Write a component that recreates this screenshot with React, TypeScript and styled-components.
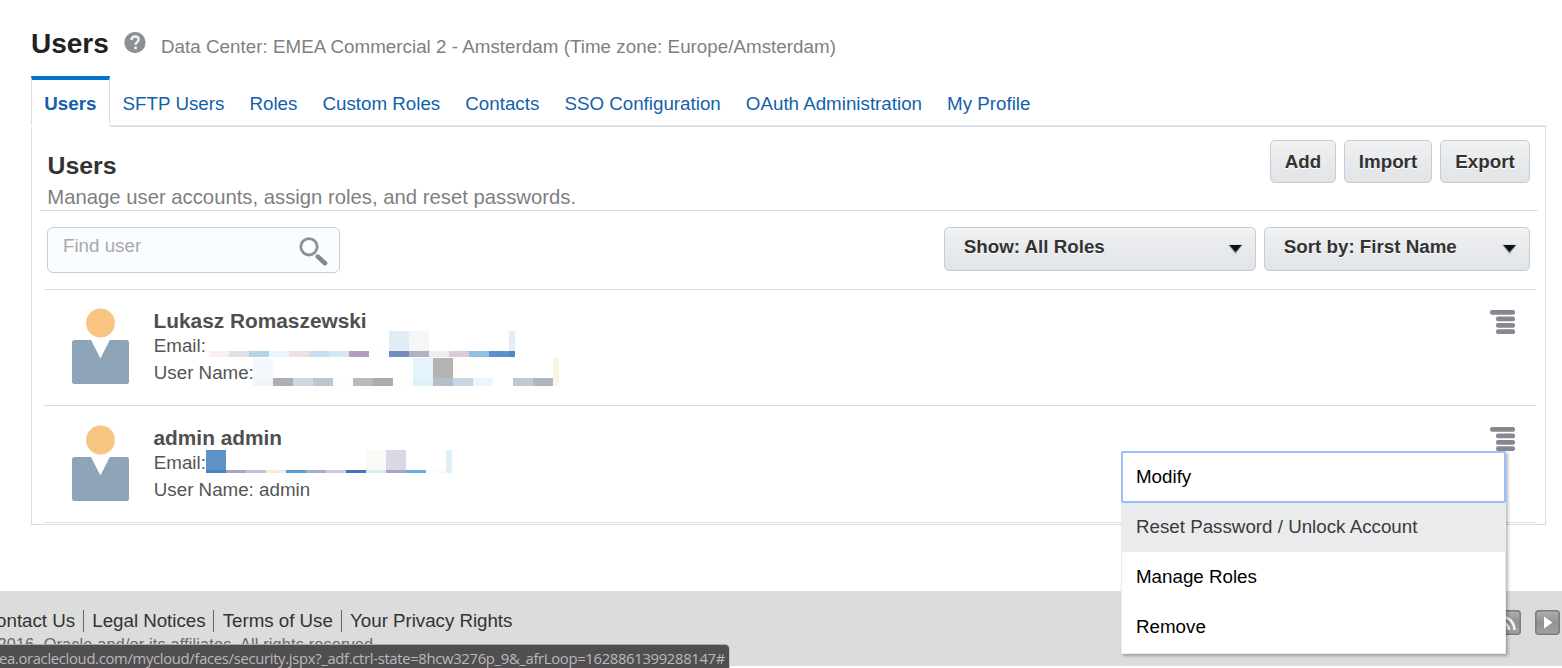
import React from "react";
import styled, { createGlobalStyle } from "styled-components";

const GlobalStyle = createGlobalStyle`
  *, *::before, *::after { box-sizing: border-box; }
  html, body { margin: 0; padding: 0; background: #fff; overflow: hidden; }
  body { font-family: "Liberation Sans", Arial, sans-serif; font-size: 18.75px; }
  button { font-family: inherit; }
`;

const LINE = "#d5dee6";

const Page = styled.div`
  position: relative;
  display: flex;
  flex-direction: column;
  width: 1562px;
  height: 668px;
  overflow: hidden;
  background: #fff;
`;

const PageHeader = styled.header`
  display: flex;
  align-items: flex-start;
  height: 76px;
  padding: 27px 0 0 31px;
`;

const PageTitle = styled.h1`
  margin: 0;
  width: 93px;
  font-size: 28px;
  line-height: 34px;
  color: #222;
`;

const HelpSlot = styled.span`
  display: block;
  width: 37px;
  height: 22px;
  margin-top: 5px;
`;

const DataCenter = styled.span`
  line-height: 39px;
  letter-spacing: 0.035px;
  color: #7f7f7f;
  white-space: nowrap;
`;

const TabBar = styled.nav`
  display: flex;
  height: 49px;
  padding-left: 31px;
`;

const Tab = styled.a<{ $active?: boolean }>`
  line-height: ${(p) => (p.$active ? "48px" : "56px")};
  width: ${(p) => (p.$active ? "79px" : "auto")};
  padding-left: ${(p) => (p.$active ? "12.3px" : "12.6px")};
  padding-right: ${(p) => (p.$active ? "0" : "12.5px")};
  border: ${(p) => (p.$active ? `1px solid ${LINE}` : "none")};
  border-bottom: none;
  border-top: ${(p) => (p.$active ? "4px solid #0572ce" : "none")};
  font-weight: ${(p) => (p.$active ? "bold" : "normal")};
  color: #145fac;
  white-space: nowrap;
  text-decoration: none;
`;

const TabRule = styled.div`
  height: 2px;
  margin: 0 16px 0 110px;
  border-top: 1px solid #e6eaec;
  border-bottom: 1px solid #d0dbe4;
`;

const Panel = styled.main`
  display: flex;
  flex-direction: column;
  width: 1515px;
  height: 398px;
  margin-left: 31px;
  border: 1px solid ${LINE};
  border-top: none;
`;

const PanelHead = styled.div`
  display: flex;
  justify-content: space-between;
  height: 84px;
  margin: 0 7px 0 8px;
  padding: 13px 8px 0 7px;
  border-bottom: 1px solid ${LINE};
`;

const PanelTitle = styled.h2`
  margin: 11px 0 0 0.5px;
  font-size: 24.8px;
  line-height: 30px;
  color: #333;
`;

const PanelIntro = styled.p`
  margin: 1px 0 0 0.3px;
  font-size: 20.3px;
  line-height: 30px;
  color: #7f7f7f;
  white-space: nowrap;
`;

const ButtonRow = styled.div`
  display: flex;
  gap: 8px;
`;

const raised = `
  border: 1px solid #c2cdd6;
  border-radius: 5px;
  background: linear-gradient(#f0f2f4, #e9ebed 40%, #e1e4e7);
  color: #333;
  font-weight: bold;
  font-size: 18.75px;
  text-shadow: 0 1px 0 #fff;
`;

const Button = styled.button<{ $width: number }>`
  ${raised}
  width: ${(p) => p.$width}px;
  height: 43px;
  padding: 0;
  line-height: 41px;
`;

const Toolbar = styled.div`
  display: flex;
  height: 78px;
  padding: 16px 15px 0 15px;
`;

const SearchBox = styled.label`
  display: flex;
  justify-content: space-between;
  width: 293px;
  height: 46px;
  margin-right: auto;
  padding: 0 11px 0 15px;
  border: 1px solid #c4ced7;
  border-radius: 6px;
  background: #fafdff;
  line-height: 35px;
  color: #a9a9a9;
`;

const SearchIconSlot = styled.span`
  width: 30px;
  padding-top: 8px;
  line-height: 0;
`;

const Select = styled.button<{ $width: number }>`
  ${raised}
  display: flex;
  justify-content: space-between;
  width: ${(p) => p.$width}px;
  height: 44px;
  margin-left: 8px;
  padding: 0 12px 0 18.8px;
  line-height: 38px;
  text-align: left;

  svg { margin-top: 16px; }
`;

const UserRow = styled.article<{ $height: number; $top: number }>`
  position: relative;
  display: flex;
  height: ${(p) => p.$height}px;
  margin: 0 9px 0 12px;
  padding: ${(p) => p.$top}px 21px 0 28px;
  border-top: 1px solid ${LINE};
`;

const UserList = styled.section`
  display: flex;
  flex-direction: column;

  &::after {
    content: "";
    margin: 0 9px 0 12px;
    border-top: 1px solid ${LINE};
  }
`;

const Avatar = styled.svg`
  width: 57px;
  height: 77px;
  flex: none;
`;

const UserInfo = styled.div`
  flex: 1;
  margin-left: 24px;
  color: #555;
`;

const UserName = styled.div`
  height: 26px;
  margin-left: 0.5px;
  font-size: 20.85px;
  line-height: 25px;
  font-weight: bold;
  color: #4f4f4f;
`;

const Detail = styled.div<{ $height: number }>`
  display: flex;
  align-items: flex-start;
  height: ${(p) => p.$height}px;
  line-height: 24px;
  white-space: nowrap;
`;

const DetailLabel = styled.span<{ $width?: number }>`
  width: ${(p) => (p.$width ? `${p.$width}px` : "auto")};
  padding-left: 0.8px;
`;

const MosaicGrid = styled.div<{ $rows: string; $lift: number }>`
  display: grid;
  grid-template-rows: ${(p) => p.$rows};
  margin-top: ${(p) => p.$lift}px;
`;

const MosaicRow = styled.div`
  display: flex;
`;

const Cell = styled.span<{ $color: string; $narrow?: boolean }>`
  width: ${(p) => (p.$narrow ? 6 : 20)}px;
  background: ${(p) => p.$color};
`;

const RowAction = styled.button`
  width: 25px;
  height: 24px;
  margin: 2px 0 0;
  padding: 0;
  border: none;
  background: none;
  line-height: 0;
`;

const ActionMenu = styled.div`
  position: absolute;
  z-index: 2;
  top: 45px;
  right: 30px;
  width: 385px;
  height: 203px;
  border: 1px solid #e8edf0;
  background: #fff;
  box-shadow: 2px 2px 3px rgba(0, 0, 0, 0.28);
`;

const MenuItem = styled.div<{ $state?: "focus" | "hover" }>`
  position: relative;
  z-index: ${(p) => (p.$state === "focus" ? 1 : 0)};
  height: ${(p) => (p.$state === "focus" ? 52 : 50)}px;
  margin: ${(p) => (p.$state === "focus" ? "-1px -1px -1px" : "0")};
  padding-left: ${(p) => (p.$state === "focus" ? 13 : 14)}px;
  border: ${(p) => (p.$state === "focus" ? "2px solid #9bbffa" : "none")};
  border-radius: ${(p) => (p.$state === "focus" ? "2px" : "0")};
  background: ${(p) => (p.$state === "hover" ? "#eaebec" : "#fff")};
  line-height: ${(p) => (p.$state === "focus" ? 47 : 49)}px;
  color: ${(p) => (p.$state === "hover" ? "#3a3a3a" : "#000")};
`;

const Footer = styled.footer`
  display: flex;
  justify-content: space-between;
  height: 75px;
  margin-top: 66px;
  padding: 19px 2px 0 0;
  background: #dcdcdc;
`;

const FooterLinks = styled.div`
  display: flex;
  height: 22px;
  margin-left: -25.7px;
  line-height: 21px;
  letter-spacing: -0.035px;
`;

const FooterLink = styled.a`
  padding: 0 8px 0 8.3px;
  border-right: 1px solid #666;
  color: #333;
  white-space: nowrap;

  &:last-child { border-right: none; }
`;

const Copyright = styled.div`
  margin: 3px 0 0 -2.5px;
  font-size: 16.25px;
  line-height: 19px;
  letter-spacing: 0.17px;
  color: #666;
  white-space: nowrap;
`;

const Social = styled.div`
  display: flex;
  gap: 14px;
`;

const StatusBar = styled.div`
  position: absolute;
  z-index: 3;
  left: 0;
  bottom: 0;
  display: flex;
  justify-content: flex-end;
  width: 730px;
  height: 24px;
  padding-right: 4px;
  border-top: 1px solid #a9a8aa;
  border-right: 1px solid #c4c3c4;
  border-radius: 0 5px 0 0;
  background: #514e52;
  font-family: "Open Sans", "Noto Sans", sans-serif;
  font-size: 14.8px;
  line-height: 26px;
  letter-spacing: -0.31px;
  color: #b9b9b9;
  white-space: nowrap;
`;

function Mosaic({ upper, lower, rows, lift }: { upper: string[]; lower: string[]; rows: string; lift: number }) {
  return (
    <MosaicGrid $rows={rows} $lift={lift}>
      {[upper, lower].map((cells, r) => (
        <MosaicRow key={r}>
          {cells.map((c, i) => (
            <Cell key={i} $color={c} $narrow={i === cells.length - 1} />
          ))}
        </MosaicRow>
      ))}
    </MosaicGrid>
  );
}

const blank = (n: number): string[] => Array(n).fill("transparent");

const emailOne = {
  upper: [...blank(9), "#e1ecf6", "#f6f6f6", ...blank(4), "#e4edf6"],
  lower: ["#f9f0ef", "#dce1ea", "#b1d4e7", "#e9f5fc", "#f0dfdf", "#c5dff3", "#d8e6f2", "#b69cbf", "#fcfefd", "#738dc0", "#b4b0c3", "#eeeeee", "#dccad7", "#91bfe5", "#5b92cd", "#5288c1"],
};
const loginOne = {
  upper: ["#f4f9fd", ...blank(7), "#e4f4fa", "#b6b4b3", "#fefdf9", ...blank(4), "#f9f5e6"],
  lower: ["#f0f7fb", "#adadb3", "#cad9e2", "#bec4d2", "#fdfdfb", "#beb8be", "#a9adb0", "#fefdf8", "#dff1f8", "#b4bfcb", "#c6d6e4", "#ecf6fa", "#fff", "#bfcad5", "#b1b5c0", "#fbf6e8"],
};
const emailTwo = {
  upper: ["#5d92c7", ...blank(7), "#faf9f6", "#dbd8e3", ...blank(2), "#dff0fa"],
  lower: ["#4a84c0", "#a9a3c5", "#bdc5da", "#f2ecdf", "#559dd6", "#aaaacb", "#c1cfe0", "#3f76b9", "#d9ebef", "#aaa3c7", "#6aaee0", "#f9fcf9", "#dff0fa"],
};

const HelpIcon = () => (
  <svg width="22" height="22" viewBox="0 0 22 22">
    <circle cx="11" cy="10.6" r="10.6" fill="#8b9094" />
    <path d="M7.5 8c0-2.2 1.5-3.5 3.6-3.5 2.1 0 3.6 1.2 3.6 3.1 0 2.5-3.1 2.7-3.1 5.1" fill="none" stroke="#eef0f1" strokeWidth="2.4" />
    <rect x="10.2" y="14.4" width="2.7" height="2.8" rx="0.6" fill="#eef0f1" />
  </svg>
);

const SearchIcon = () => (
  <svg width="30" height="32" viewBox="0 0 30 32">
    <circle cx="11" cy="10.8" r="8.2" fill="none" stroke="#8d9194" strokeWidth="2.8" />
    <path d="M19.8 20.6 27 27.2" stroke="#85898c" strokeWidth="4.6" strokeLinecap="round" />
  </svg>
);

const Caret = () => (
  <svg width="15" height="11" viewBox="0 0 15 11">
    <path d="M0 0.8h15L7.5 10.4z" fill="#6d87a0" opacity="0.55" />
    <path d="M1.3 1h12.4L7.5 8.2z" fill="#0c1218" />
  </svg>
);

const ListIcon = () => (
  <svg width="25" height="24" viewBox="0 0 25 24" fill="#85888e">
    <rect x="0" y="0" width="25" height="4.8" rx="2" />
    <rect x="6" y="6.6" width="19" height="4.7" rx="2" />
    <rect x="6" y="13" width="19" height="4.7" rx="2" />
    <rect x="6" y="19.3" width="19" height="4.7" rx="2" />
  </svg>
);

const Person = () => (
  <Avatar viewBox="0 0 57 77">
    <circle cx="28.5" cy="15" r="14.4" fill="#f7c482" />
    <path d="M2.5 32H19l9.4 18.5L37.8 32H54.5Q57 32 57 34.5v39Q57 76 54.5 76h-52Q0 76 0 73.5v-39Q0 32 2.5 32z" fill="#8ea4b8" />
  </Avatar>
);

const Badge = ({ children }: { children: React.ReactNode }) => (
  <svg width="25" height="25" viewBox="0 0 25 25">
    <defs>
      <linearGradient id="badge" x1="0" y1="0" x2="0" y2="1">
        <stop offset="0" stopColor="#b0b0b0" />
        <stop offset="0.5" stopColor="#929292" />
        <stop offset="1" stopColor="#a2a2a2" />
      </linearGradient>
    </defs>
    <rect x="0.8" y="0.8" width="23.4" height="23.4" rx="3" fill="url(#badge)" stroke="#7c7c7c" strokeWidth="1.6" />
    {children}
  </svg>
);

const tabs = ["Users", "SFTP Users", "Roles", "Custom Roles", "Contacts", "SSO Configuration", "OAuth Administration", "My Profile"];
const links = ["Contact Us", "Legal Notices", "Terms of Use", "Your Privacy Rights"];

export default function App() {
  return (
    <>
      <GlobalStyle />
      <Page>
        <PageHeader>
          <PageTitle>Users</PageTitle>
          <HelpSlot><HelpIcon /></HelpSlot>
          <DataCenter>Data Center: EMEA Commercial 2 - Amsterdam (Time zone: Europe/Amsterdam)</DataCenter>
        </PageHeader>

        <TabBar>
          {tabs.map((t, i) => <Tab key={t} $active={i === 0}>{t}</Tab>)}
        </TabBar>
        <TabRule />

        <Panel>
          <PanelHead>
            <div>
              <PanelTitle>Users</PanelTitle>
              <PanelIntro>Manage user accounts, assign roles, and reset passwords.</PanelIntro>
            </div>
            <ButtonRow>
              <Button $width={66}>Add</Button>
              <Button $width={88}>Import</Button>
              <Button $width={90}>Export</Button>
            </ButtonRow>
          </PanelHead>

          <Toolbar>
            <SearchBox>
              Find user
              <SearchIconSlot><SearchIcon /></SearchIconSlot>
            </SearchBox>
            <Select $width={312}>Show: All Roles<Caret /></Select>
            <Select $width={266}>Sort by: First Name<Caret /></Select>
          </Toolbar>

          <UserList>
            <UserRow $height={116} $top={18}>
              <Person />
              <UserInfo>
                <UserName>Lukasz Romaszewski</UserName>
                <Detail $height={27}>
                  <DetailLabel $width={56}>Email:</DetailLabel>
                  <Mosaic {...emailOne} rows="20px 6px" lift={-3} />
                </Detail>
                <Detail $height={27}>
                  <DetailLabel $width={100}>User Name:</DetailLabel>
                  <Mosaic {...loginOne} rows="20px 8px" lift={-3} />
                </Detail>
              </UserInfo>
              <RowAction><ListIcon /></RowAction>
            </UserRow>
            <UserRow $height={117} $top={19}>
              <Person />
              <UserInfo>
                <UserName>admin admin</UserName>
                <Detail $height={27}>
                  <DetailLabel $width={53}>Email:</DetailLabel>
                  <Mosaic {...emailTwo} rows="20px 3px" lift={-1} />
                </Detail>
                <Detail $height={27}>
                  <DetailLabel>User Name: admin</DetailLabel>
                </Detail>
              </UserInfo>
              <RowAction><ListIcon /></RowAction>
              <ActionMenu>
                <MenuItem $state="focus">Modify</MenuItem>
                <MenuItem $state="hover">Reset Password / Unlock Account</MenuItem>
                <MenuItem>Manage Roles</MenuItem>
                <MenuItem>Remove</MenuItem>
              </ActionMenu>
            </UserRow>
          </UserList>
        </Panel>

        <Footer>
          <div>
            <FooterLinks>
              {links.map((l) => <FooterLink key={l}>{l}</FooterLink>)}
            </FooterLinks>
            <Copyright>2016, Oracle and/or its affiliates. All rights reserved.</Copyright>
          </div>
          <Social>
            <Badge>
              <circle cx="7" cy="18" r="2" fill="#fff" />
              <path d="M5 12a8 8 0 0 1 8 8M5 6.5A13.5 13.5 0 0 1 18.5 20" fill="none" stroke="#f4f4f4" strokeWidth="2.6" />
            </Badge>
            <Badge>
              <path d="M9 6.5 17.5 12.5 9 18.5z" fill="#fff" />
            </Badge>
          </Social>
        </Footer>

        <StatusBar>ea.oraclecloud.com/mycloud/faces/security.jspx?_adf.ctrl-state=8hcw3276p_9&amp;_afrLoop=1628861399288147#</StatusBar>
      </Page>
    </>
  );
}
